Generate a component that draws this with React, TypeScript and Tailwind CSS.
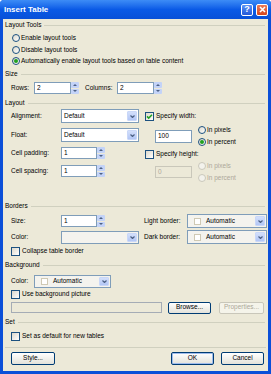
import React from "react";

function Header({ title }: { title: string }) {
  return (
    <div className="flex h-[12px] items-center pl-[2px] pr-[3px]">
      <span>{title}</span>
      <div className="ml-[3px] h-px flex-1 bg-[#d0d0bf]" />
    </div>
  );
}

function Radio({ label, checked, disabled }: { label: string; checked?: boolean; disabled?: boolean }) {
  return (
    <div className="flex h-[12px] items-center">
      <span
        className={`flex h-[8px] w-[8px] items-center justify-center rounded-full border ${
          disabled ? "border-[#cac8bb] bg-[#f3f2ec]" : "border-[#1c5180] bg-linear-to-br from-[#dcd8cc] to-white"
        }`}
      >
        {checked && <span className="h-[4px] w-[4px] rounded-full bg-[#21a121]" />}
      </span>
      <span className={`ml-[1px] ${disabled ? "text-[#aca899]" : ""}`}>{label}</span>
    </div>
  );
}

function Check({ label, checked }: { label: string; checked?: boolean }) {
  return (
    <div className="flex items-center">
      <span className="flex h-[9px] w-[9px] items-center justify-center border border-[#1c5180] bg-linear-to-br from-[#dcd8cc] to-white">
        {checked && (
          <svg width="7" height="7" viewBox="0 0 7 7">
            <path d="M1 3.4 L2.7 5.1 L6 1.7" stroke="#21a121" strokeWidth="1.5" fill="none" />
          </svg>
        )}
      </span>
      <span className="ml-[2px]">{label}</span>
    </div>
  );
}

function Spin() {
  return (
    <div className="flex h-[12px] w-[8px] flex-col gap-px">
      <div className="flex flex-1 items-center justify-center rounded-[1px] bg-[#c3d3f8]">
        <svg width="4" height="2" viewBox="0 0 4 2">
          <path d="M0 2 L2 0 L4 2 Z" fill="#4d6185" />
        </svg>
      </div>
      <div className="flex flex-1 items-center justify-center rounded-[1px] bg-[#c3d3f8]">
        <svg width="4" height="2" viewBox="0 0 4 2">
          <path d="M0 0 L2 2 L4 0 Z" fill="#4d6185" />
        </svg>
      </div>
    </div>
  );
}

function Arrow() {
  return (
    <div className="flex h-full w-[10px] items-center justify-center rounded-[1px] border border-[#c9d7f8] bg-linear-to-b from-[#d3dffb] to-[#b2c6f5]">
      <svg width="5" height="3" viewBox="0 0 5 3">
        <path d="M0.5 0.5 L2.5 2.5 L4.5 0.5" stroke="#4d6185" strokeWidth="1.2" fill="none" />
      </svg>
    </div>
  );
}

function Combo({ className, children, light }: { className: string; children?: React.ReactNode; light?: boolean }) {
  return (
    <div className={`flex items-center border border-[#7f9db9] p-px ${light ? "bg-[#f4f3ee]" : "bg-white"} ${className}`}>
      <div className="flex flex-1 items-center overflow-hidden pl-[1px]">{children}</div>
      <Arrow />
    </div>
  );
}

function Swatch({ text }: { text: string }) {
  return (
    <>
      <span className="ml-[4px] h-[7px] w-[7px] border border-[#cfc9b4] bg-white" />
      <span className="ml-[5px]">{text}</span>
    </>
  );
}

function Btn({ label, className, def, disabled }: { label: string; className: string; def?: boolean; disabled?: boolean }) {
  return (
    <div
      className={`flex items-center justify-center rounded-[2px] border ${
        disabled
          ? "border-[#c9c7ba] bg-[#f5f4ea] text-[#aca899]"
          : "border-[#003c74] bg-linear-to-b from-white to-[#e3e2da]"
      } ${def ? "shadow-[inset_0_0_0_1px_#9fbcec]" : ""} ${className}`}
    >
      {label}
    </div>
  );
}

export default function App() {
  return (
    <div className="flex h-[374px] w-[271px] flex-col rounded-t-[4px] bg-[#0b4fd8] font-['Liberation_Sans',Arial,sans-serif] text-[6.5px] leading-none text-black">
      <div className="flex h-[19px] items-center rounded-t-[4px] bg-linear-to-b from-[#3d8cf6] via-[#0a5ae6] to-[#0850d8] pl-[4px] pr-[3px]">
        <span className="text-[8px] font-bold text-white">Insert Table</span>
        <div className="ml-auto flex gap-[3px]">
          <div className="flex h-[12px] w-[12px] items-center justify-center rounded-[2px] border border-white bg-linear-to-b from-[#5b92f7] to-[#2357d8] text-[9px] font-bold text-white">
            ?
          </div>
          <div className="flex h-[12px] w-[12px] items-center justify-center rounded-[2px] border border-white bg-linear-to-b from-[#ec7a56] to-[#d4451c]">
            <svg width="7" height="7" viewBox="0 0 7 7">
              <path d="M1 1 L6 6 M6 1 L1 6" stroke="white" strokeWidth="1.6" />
            </svg>
          </div>
        </div>
      </div>

      <div className="mx-[3px] mb-[3px] flex flex-1 flex-col bg-[#ece9d8]">
        <Header title="Layout Tools" />
        <div className="mt-[1px] flex flex-col pl-[9px]">
          <Radio label="Enable layout tools" />
          <Radio label="Disable layout tools" />
          <div className="-mt-px">
            <Radio label="Automatically enable layout tools based on table content" checked />
          </div>
        </div>

        <div className="mt-[1px]">
          <Header title="Size" />
        </div>
        <div className="mt-[2px] flex h-[12px] items-center pl-[8px]">
          <span className="w-[23px]">Rows:</span>
          <div className="flex h-[12px] w-[37px] items-center border border-[#7f9db9] bg-white pl-[2px]">2</div>
          <Spin />
          <span className="ml-[6px] w-[32px]">Columns:</span>
          <div className="flex h-[12px] w-[37px] items-center border border-[#7f9db9] bg-white pl-[2px]">2</div>
          <Spin />
        </div>

        <div className="mt-[3px]">
          <Header title="Layout" />
        </div>
        <div className="flex h-[75px]">
          <div className="flex w-[142px] flex-col pl-[8px]">
            <div className="flex h-[14px] items-center">
              <span className="w-[50px]">Alignment:</span>
              <Combo className="h-[14px] w-[78px]">Default</Combo>
            </div>
            <div className="mt-[5px] flex h-[14px] items-center">
              <span className="w-[50px]">Float:</span>
              <Combo className="h-[14px] w-[78px]">Default</Combo>
            </div>
            <div className="mt-[5px] flex h-[12px] items-center">
              <span className="w-[50px]">Cell padding:</span>
              <div className="flex h-[12px] w-[36px] items-center border border-[#7f9db9] bg-white pl-[2px]">1</div>
              <Spin />
            </div>
            <div className="mt-[6px] flex h-[12px] items-center">
              <span className="w-[50px]">Cell spacing:</span>
              <div className="flex h-[12px] w-[36px] items-center border border-[#7f9db9] bg-white pl-[2px]">1</div>
              <Spin />
            </div>
          </div>
          <div className="flex flex-1 flex-col">
            <div className="flex h-[15px] items-center">
              <Check label="Specify width:" checked />
            </div>
            <div className="flex h-[24px] items-center">
              <div className="ml-[10px] flex h-[13px] w-[37px] items-center border border-[#7f9db9] bg-white pl-[2px]">100</div>
              <div className="ml-[6px] flex flex-col">
                <Radio label="In pixels" />
                <Radio label="In percent" checked />
              </div>
            </div>
            <div className="flex h-[12px] items-center">
              <Check label="Specify height:" />
            </div>
            <div className="flex h-[24px] items-center">
              <div className="ml-[10px] flex h-[12px] w-[37px] items-center border border-[#c9c7ba] pl-[2px] text-[#aca899]">0</div>
              <div className="ml-[6px] flex flex-col">
                <Radio label="In pixels" disabled />
                <Radio label="In percent" disabled />
              </div>
            </div>
          </div>
        </div>

        <div className="mt-[16px]">
          <Header title="Borders" />
        </div>
        <div className="mt-[2px] flex h-[14px] items-center pl-[8px]">
          <div className="flex w-[133px] items-center">
            <span className="w-[50px]">Size:</span>
            <div className="flex h-[12px] w-[36px] items-center border border-[#7f9db9] bg-white pl-[2px]">1</div>
            <Spin />
          </div>
          <span className="w-[43px]">Light border:</span>
          <Combo className="h-[14px] w-[80px]" light>
            <Swatch text="Automatic" />
          </Combo>
        </div>
        <div className="mt-[2px] flex h-[14px] items-center pl-[8px]">
          <div className="flex w-[133px] items-center">
            <span className="w-[50px]">Color:</span>
            <Combo className="h-[13px] w-[78px]" light />
          </div>
          <span className="w-[43px]">Dark border:</span>
          <Combo className="h-[14px] w-[80px]" light>
            <Swatch text="Automatic" />
          </Combo>
        </div>
        <div className="mt-[1px] flex h-[12px] items-center pl-[8px]">
          <Check label="Collapse table border" />
        </div>

        <div className="mt-[2px]">
          <Header title="Background" />
        </div>
        <div className="mt-[3px] flex h-[14px] items-center pl-[8px]">
          <span className="w-[23px]">Color:</span>
          <Combo className="h-[13px] w-[77px]" light>
            <Swatch text="Automatic" />
          </Combo>
        </div>
        <div className="flex h-[12px] items-center pl-[8px]">
          <Check label="Use background picture" />
        </div>
        <div className="mt-[1px] flex h-[13px] items-center pl-[8px]">
          <div className="h-[11px] w-[151px] border border-[#a5acb5] bg-[#ece9d8]" />
          <Btn label="Browse..." className="ml-[6px] h-[12px] w-[43px]" />
          <Btn label="Properties..." className="ml-[8px] h-[12px] w-[45px]" disabled />
        </div>

        <div className="mt-[2px]">
          <Header title="Set" />
        </div>
        <div className="mt-[2px] flex h-[12px] items-center pl-[8px]">
          <Check label="Set as default for new tables" />
        </div>
        <div className="mx-[2px] mt-[5px] h-px bg-[#d0d0bf]" />
        <div className="mt-[4px] flex h-[13px] items-center pl-[8px] pr-[4px]">
          <Btn label="Style..." className="h-[13px] w-[44px]" />
          <Btn label="OK" className="ml-auto h-[13px] w-[43px]" def />
          <Btn label="Cancel" className="ml-[7px] h-[13px] w-[43px]" />
        </div>
      </div>
    </div>
  );
}
